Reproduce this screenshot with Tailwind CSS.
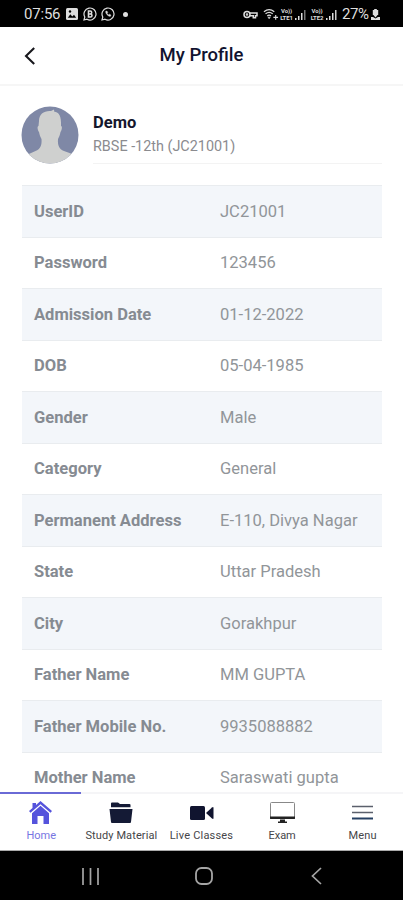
<!DOCTYPE html>
<html lang="en">
<head>
    <meta charset="UTF-8">
    <meta name="viewport" content="width=device-width, initial-scale=1.0">
    <title>My Profile</title>
    <script src="https://cdn.jsdelivr.net/npm/@tailwindcss/browser@4"></script>
</head>
<body class="bg-white font-[Roboto,sans-serif]">
    <div class="flex flex-col h-[900px] w-[403px] overflow-hidden">
        <!-- Status bar -->
        <div class="flex items-center shrink-0 h-[27px] pt-px bg-black text-[#dedede] pl-6 pr-[23px]">
            <span class="text-[15px] w-[37px] whitespace-nowrap tracking-[-0.2px]">07:56</span>
            <svg class="ml-[5px]" width="12" height="12" viewBox="0 0 12 12"><rect width="12" height="12" rx="1.500" fill="#dedede"/><path d="M1.800 9.800l2.500-3.600 2 2.200 1.700-1.700 2.200 3.100z" fill="#000"/><circle cx="4" cy="3.500" r="1.200" fill="#000"/></svg>
            <svg class="ml-[5px]" width="14" height="14" viewBox="0 0 14 14" fill="none" stroke="#dedede"><path d="M1 13l.8-3A6 6 0 1 1 4 12.200z" stroke-width="1.200"/><path d="M5.500 4h1.700a1.400 1.400 0 0 1 0 3H5.500zm0 3h2a1.400 1.400 0 0 1 0 3h-2z" stroke-width="1.600"/></svg>
            <svg class="ml-[4px]" width="14" height="14" viewBox="0 0 14 14" fill="none" stroke="#dedede"><path d="M1 13l.8-3A6 6 0 1 1 4 12.200z" stroke-width="1.200"/><path d="M4.800 4.300c-.6 2 2.400 5.300 4.600 5l.5-1.300-1.600-.8-.8.7-1.400-1.500.6-.8-.7-1.500z" fill="#dedede" stroke-width=".5"/></svg>
            <span class="ml-[8px] size-[5px] rounded-full bg-[#dedede]"></span>
            <svg class="ml-auto" width="15" height="9" viewBox="0 0 15 9" fill="none" stroke="#dedede" stroke-width="1.500"><circle cx="4" cy="4.500" r="3"/><circle cx="4" cy="4.500" r=".5"/><path d="M7 3h7v2.700h-1.500v2h-2.200v-2H7"/></svg>
            <svg class="ml-[5px]" width="16" height="13" viewBox="0 0 17 13" fill="none" stroke="#dedede" stroke-width="1.300"><path d="M1 3.600Q6.500-.8 12 3.600M2.700 5.800q3.800-3 7.600 0M4.500 8q2-1.600 4 0"/><path d="M5.300 9.300h2.400l-1.200 1.800z" fill="#dedede" stroke-width=".6"/><path d="M11 9.500h5M13.500 7v5" stroke-width="1.200"/></svg>
            <div class="w-[15px] text-[6px] leading-[7px] font-bold text-center tracking-[-0.1px]"><div>Vo))</div><div>LTE1</div></div>
            <svg class="ml-[1px]" width="11" height="11" viewBox="0 0 11 11" fill="#dedede"><path d="M0 9h1.500v2H0zM3 7h1.500v4H3zM6 4h1.500v7H6z"/><path d="M9 1h1.500v10H9z" fill="#777"/></svg>
            <div class="ml-[3px] w-[16px] text-[6px] leading-[7px] font-bold text-center tracking-[-0.1px]"><div>Vo))</div><div>LTE2</div></div>
            <svg class="ml-[1px]" width="11" height="11" viewBox="0 0 11 11" fill="#dedede"><path d="M0 9h1.500v2H0zM3 7h1.500v4H3zM6 4h1.500v7H6z"/><path d="M9 1h1.500v10H9z" fill="#ccc"/></svg>
            <span class="ml-[5px] w-[29px] whitespace-nowrap text-[15px] tracking-[-0.4px]">27%</span>
            <svg width="9" height="11" viewBox="0 0 9 11" fill="#dedede"><path d="M3.200 0h2.600v1h1.400v5H1.800V1h1.400zM0 8h2l2.500 1.500L7 8h2v3H0z"/><path d="M2 5.500h5L4.500 8.500z"/></svg>
        </div>

        <!-- Header -->
        <header class="relative flex items-center justify-center shrink-0 h-[59px] border-b-2 border-[#f6f6f6]">
            <svg class="absolute left-[24px] top-[20px]" width="12" height="18" viewBox="0 0 12 18" fill="none" stroke="#17171c" stroke-width="2.100"><path d="M10.200 1L2 9l8.200 8"/></svg>
            <h1 class="text-[18.500px] font-medium text-[#11132f]">My Profile</h1>
        </header>

        <main class="grow min-h-0 overflow-hidden pl-[22px] pr-[21px]">
            <!-- Student card -->
            <div class="flex h-[99px] pt-[20px]">
                <svg class="shrink-0 -ml-px" width="58" height="58" viewBox="0 0 58 58">
                    <clipPath id="avatar"><circle cx="29" cy="29" r="28.500"/></clipPath>
                    <g clip-path="url(#avatar)">
                        <rect width="58" height="58" fill="#7f88a6"/>
                        <path d="M18 15C18 8 23 4.500 30 5l3-1.500.3 2.200C38 6 40.500 10 40 20c1.500 0 1 4-.5 6-.5 3-1.500 5-2.500 7-.5 6 1 10 6 12 5 1.500 8 3 10.500 5V58H4v-7.500c2-2 6-3.500 10.500-5.500 5-2 6.500-6 6-12-1-2-2-4-2.500-7-1.500-2-2-6-.5-6z" fill="#cfd0cf"/>
                    </g>
                </svg>
                <div class="grow h-[58px] ml-[14px] pt-[7px] border-b border-[#f3f3f3]">
                    <h2 class="text-[16.500px] leading-[20px] font-bold text-[#15172d]">Demo</h2>
                    <p class="mt-[5px] text-[14.400px] leading-[18px] text-[#8b8b8f]">RBSE -12th (JC21001)</p>
                </div>
            </div>

            <!-- Details, filled in below -->
            <div id="details" class="border-t border-[#e9ecef]"></div>
        </main>

        <!-- Tab bar -->
        <nav class="grid grid-cols-5 shrink-0 h-[59px] text-[11px] text-[#454548] border-b border-[#aaa]">
            <a class="flex flex-col items-center border-t-2 border-[#6a6ad6] pt-[7px] text-[#7775e2]">
                <svg width="23" height="23" viewBox="0 0 23 23" fill="#5553dc"><path d="M11.500 0L7 3.900V2H3.500v5L0 10l1.500 1.700 10-8.500 10 8.500L23 10z"/><path d="M3 12.200l8.500-7.400 8.500 7.400V23h-5.500v-8h-6v8H3z"/></svg>
                <span class="ml-[2px] mt-[5px] leading-[13px]">Home</span>
            </a>
            <a class="flex flex-col items-center border-t-2 border-[#f5f5f7] pt-[8px]">
                <svg width="24" height="22" viewBox="0 0 24 22" fill="#141a35"><path d="M2 5.300V1.500q0-1 1-1h6l2 1.500h9.500q1 0 1 1v2.300z"/><path d="M.5 7h23L22 20q0 1-1 1H3q-1 0-1-1z"/></svg>
                <span class="ml-[1px] mt-[5px] leading-[13px] whitespace-nowrap tracking-[0.1px]">Study Material</span>
            </a>
            <a class="flex flex-col items-center border-t-2 border-[#f5f5f7] pt-[8px]">
                <svg width="25" height="22" viewBox="0 0 25 22" fill="#10142f"><rect x="1" y="4" width="15" height="14" rx="1.500"/><path d="M17 11l6-5.500q1.500-1 1.500.5v10q0 1.500-1.500.5z"/></svg>
                <span class="mt-[5px] leading-[13px] whitespace-nowrap tracking-[0.2px]">Live Classes</span>
            </a>
            <a class="flex flex-col items-center border-t-2 border-[#f5f5f7] pt-[8px]">
                <svg width="25" height="22" viewBox="0 0 25 22"><rect x=".5" y=".5" width="24" height="16" rx="1" fill="#fff" stroke="#888"/><path d="M0 14.500h25v2q0 .5-1 .5H1q-1 0-1-.5zM10 17.500h5v2h2V21H8v-1.500h2z" fill="#222"/></svg>
                <span class="mt-[5px] leading-[13px]">Exam</span>
            </a>
            <a class="flex flex-col items-center border-t-2 border-[#f5f5f7] pt-[8px]">
                <svg width="21" height="22" viewBox="0 0 21 22" stroke-width="1.700"><path d="M0 4.500h21M0 10.500h21" stroke="#5b606c"/><path d="M0 16.500h21" stroke="#264063" stroke-width="2"/></svg>
                <span class="mt-[5px] leading-[13px] tracking-[0.2px]">Menu</span>
            </a>
        </nav>

        <!-- System buttons -->
        <div class="grid grid-cols-[181px_45px_181px] shrink-0 h-[49px] pt-px bg-black items-center justify-items-center">
            <svg width="17" height="17" viewBox="0 0 17 17" stroke="#a5a5a5" stroke-width="1.700"><path d="M1 0v17M8.500 0v17M16 0v17"/></svg>
            <svg width="18" height="18" viewBox="0 0 18 18" fill="none" stroke="#a5a5a5" stroke-width="1.800"><rect x="1" y="1" width="16" height="16" rx="5.500"/></svg>
            <svg width="11" height="18" viewBox="0 0 11 18" fill="none" stroke="#a5a5a5" stroke-width="1.700"><path d="M10 1L1.500 9l8.500 8"/></svg>
        </div>
    </div>

    <script>
        const details = [
            ['UserID', 'JC21001'],
            ['Password', '123456'],
            ['Admission Date', '01-12-2022'],
            ['DOB', '05-04-1985'],
            ['Gender', 'Male'],
            ['Category', 'General'],
            ['Permanent Address', 'E-110, Divya Nagar'],
            ['State', 'Uttar Pradesh'],
            ['City', 'Gorakhpur'],
            ['Father Name', 'MM GUPTA'],
            ['Father Mobile No.', '9935088882'],
            ['Mother Name', 'Saraswati gupta']
        ];

        document.getElementById('details').innerHTML = details.map(([label, value]) => `
            <div class="flex items-center h-[51.5px] pt-[2px] pl-[12px] border-b border-[#e9ecef] odd:bg-[#f3f6fa] text-[16.55px] text-[#919599]">
                <div class="w-[186px] font-bold text-[#868b92] whitespace-nowrap">${label}</div>
                <div class="whitespace-nowrap">${value}</div>
            </div>
        `).join('');
    </script>
</body>
</html>
